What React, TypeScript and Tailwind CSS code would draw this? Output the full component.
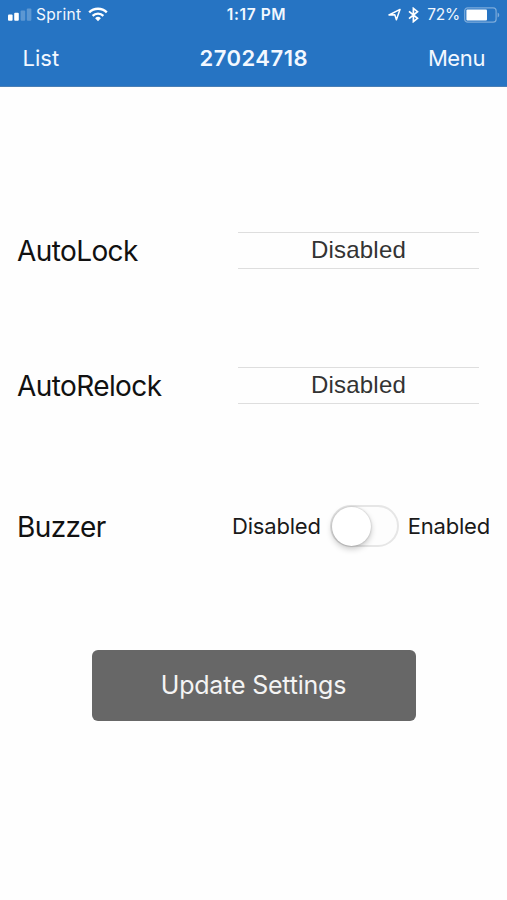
import type { ReactNode } from "react";

const signalBars = [
  { x: 0, y: 6.6, height: 6.2, on: true },
  { x: 6.2, y: 4.8, height: 8, on: true },
  { x: 12.6, y: 2.6, height: 10.2, on: false },
  { x: 18.8, y: 0.4, height: 12.4, on: false }
];

function StatusBar() {
  return (
    <div className="grid h-[29px] grid-cols-3 items-center text-[15.5px] leading-none">
      <div className="flex items-center pl-2">
        <svg width="24" height="13" viewBox="0 0 24 13" fill="#fff">
          {signalBars.map((bar) => (
            <rect
              key={bar.x}
              x={bar.x}
              y={bar.y}
              width="4.6"
              height={bar.height}
              rx="1"
              opacity={bar.on ? 1 : 0.25}
            />
          ))}
        </svg>
        <span className="ml-1 tracking-[0.3px]">Sprint</span>
        <svg className="ml-[7px]" width="20" height="15" viewBox="0 0 20 15" fill="none" stroke="#fff">
          <path d="M1.2 5.4a12.6 12.6 0 0 1 17.6 0" strokeWidth="2.4" />
          <path d="M4.6 8.9a7.7 7.7 0 0 1 10.8 0" strokeWidth="2.3" />
          <path d="M10 14.2 7.1 11.3a4.1 4.1 0 0 1 5.8 0Z" fill="#fff" stroke="none" />
        </svg>
      </div>
      <div className="pl-1.5 text-center font-semibold tracking-[0.6px]">1:17 PM</div>
      <div className="flex items-center justify-end pr-[7px]">
        <svg width="13" height="13" viewBox="0 0 13 13" fill="none" stroke="#fff" strokeWidth="1.5" strokeLinejoin="round">
          <path d="M12 1.4 1 7l5.8-.3 1.6 5.1Z" />
        </svg>
        <svg className="ml-[7px]" width="11" height="16" viewBox="0 0 11 16" fill="none" stroke="#fff" strokeWidth="1.7">
          <path d="m1 4.3 8.5 7-4.1 3.3V1.4l4.1 3.3-8.5 7" />
        </svg>
        <span className="ml-2 tracking-[-0.2px]">72%</span>
        <svg className="ml-1" width="36" height="16" viewBox="0 0 36 16">
          <rect x="0.7" y="0.8" width="31.4" height="14.4" rx="3" fill="none" stroke="#fff" strokeOpacity="0.4" strokeWidth="1.2" />
          <rect x="2.4" y="2.4" width="20.6" height="11.2" rx="1" fill="#fff" />
          <path d="M33.6 5.5c2.2.8 2.2 4.2 0 5Z" fill="#fff" opacity="0.4" />
        </svg>
      </div>
    </div>
  );
}

function SettingRow({ label, children }: { label: string; children: ReactNode }) {
  return (
    <div className="flex h-[42px] items-center justify-between pl-[17px]">
      <span className="pt-0.5 text-[28px] leading-none tracking-[-0.6px] text-[#111]">{label}</span>
      {children}
    </div>
  );
}

function PickerField({ value }: { value: string }) {
  return (
    <div className="mr-7 flex h-[37px] w-[241px] items-center justify-center border-y border-[#dedede] font-['Liberation_Sans',Arial,sans-serif] text-[24px] leading-none tracking-[0.2px] text-[#333]">
      {value}
    </div>
  );
}

export default function App() {
  return (
    <div className="h-[900px] w-[507px] overflow-hidden bg-[#fefefe] font-[Inter,sans-serif]">
      <header className="h-[87px] border-b border-[#4a7fb5] bg-[#2674c3] text-[#f2f8ff]">
        <StatusBar />
        <nav className="grid h-[57px] grid-cols-3 items-center pr-[22px] pl-[22.5px] text-[22px] leading-none">
          <button type="button" className="text-left">
            List
          </button>
          <h1 className="text-center font-semibold tracking-[0.5px]">27024718</h1>
          <button type="button" className="text-right tracking-[-0.4px]">
            Menu
          </button>
        </nav>
      </header>

      <main className="pt-[142px]">
        <SettingRow label="AutoLock">
          <PickerField value="Disabled" />
        </SettingRow>
        <div className="mt-[93px]">
          <SettingRow label="AutoRelock">
            <PickerField value="Disabled" />
          </SettingRow>
        </div>
        <div className="mt-[99px]">
          <SettingRow label="Buzzer">
            <div className="flex items-center pr-[17px] text-[22px] leading-none tracking-[-0.2px] text-[#1a1a1a]">
              <span>Disabled</span>
              <button
                type="button"
                role="switch"
                aria-checked="false"
                aria-label="Buzzer"
                className="mr-[9px] ml-[9px] flex h-[42px] w-[69px] items-center rounded-full border-2 border-[#e6e6e6] bg-[#fdfdfd]"
              >
                <span className="h-[39px] w-[39px] shrink-0 rounded-full bg-white shadow-[0_3px_6px_rgba(0,0,0,0.22),0_0_2px_rgba(0,0,0,0.25)]" />
              </button>
              <span>Enabled</span>
            </div>
          </SettingRow>
        </div>
        <button
          type="button"
          className="mx-auto mt-[102.5px] flex h-[71px] w-[324px] items-center justify-center rounded-md bg-[#676767] text-[25px] leading-none tracking-[-0.2px] text-[#f4f4f4]"
        >
          Update Settings
        </button>
      </main>
    </div>
  );
}
